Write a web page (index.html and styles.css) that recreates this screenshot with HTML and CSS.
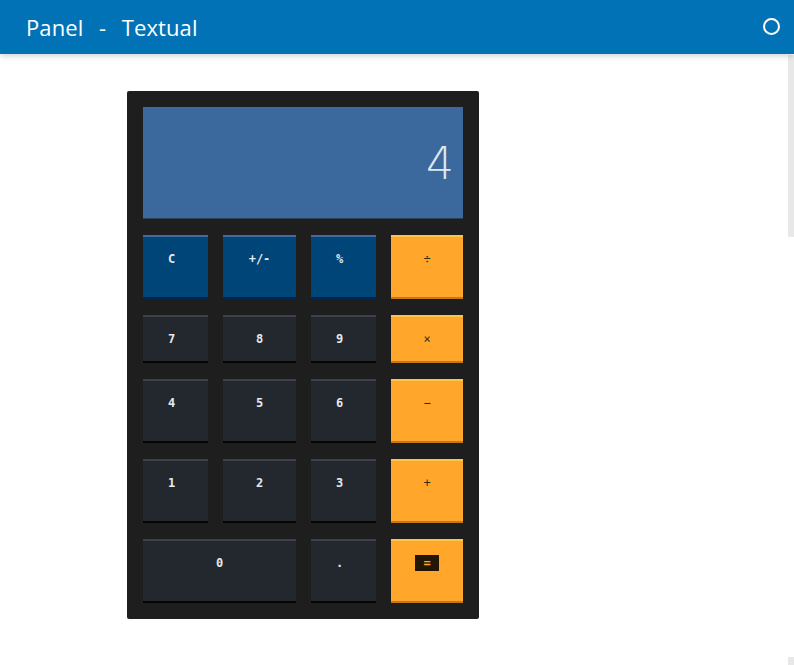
FILE: index.html
```html
<!DOCTYPE html>
<html>
<head>
<meta charset="utf-8">
<link rel="stylesheet" href="styles.css">
</head>
<body>
<header class="topbar">
  <div class="title">Panel  -  Textual</div>
  <div class="status"></div>
</header>
<main class="content">
  <div class="calc">
    <div class="display"><span class="readout">4</span></div>
    <div class="keys">
      <div class="key fn narrow">C</div>
      <div class="key fn">+/-</div>
      <div class="key fn narrow">%</div>
      <div class="key op">÷</div>
      <div class="key num narrow">7</div>
      <div class="key num">8</div>
      <div class="key num narrow">9</div>
      <div class="key op">×</div>
      <div class="key num narrow">4</div>
      <div class="key num">5</div>
      <div class="key num narrow">6</div>
      <div class="key op">−</div>
      <div class="key num narrow">1</div>
      <div class="key num">2</div>
      <div class="key num narrow">3</div>
      <div class="key op">+</div>
      <div class="key num wide">0</div>
      <div class="key num narrow">.</div>
      <div class="key op eq"><span class="eqbox">=</span></div>
    </div>
  </div>
</main>
<div class="scroll-thumb"></div>
<div class="scroll-corner"></div>
</body>
</html>
```
FILE: styles.css
```css
html, body {
  margin: 0;
  padding: 0;
  background: #ffffff;
  height: 100%;
  overflow: hidden;
}
body {
  font-family: "Open Sans", "Noto Sans", sans-serif;
  position: relative;
}
.topbar {
  height: 54px;
  background: #0072b5;
  display: flex;
  align-items: center;
  justify-content: space-between;
  padding: 0 14px 0 26px;
  box-shadow: 0 2px 6px rgba(0,0,0,0.18);
  position: relative;
  z-index: 1;
}
.title {
  color: #ffffff;
  font-size: 22px;
  white-space: pre;
  word-spacing: 2px;
  letter-spacing: 0.1px;
  margin-top: -1px;
}
.status {
  width: 13px;
  height: 13px;
  border: 2.5px solid #ffffff;
  border-radius: 50%;
  margin-top: -2px;
}
.content {
  padding: 37px 0 0 127px;
}
.calc {
  width: 320px;
  padding: 16px;
  background: #1e1e1e;
  border-radius: 2px;
  display: flex;
  flex-direction: column;
  gap: 16px;
}
.display {
  height: 111px;
  background: #3b699d;
  border-bottom: 1px solid #2f3f52;
  display: flex;
  justify-content: flex-end;
  align-items: center;
  padding-right: 9px;
}
.readout {
  font-family: "DejaVu Sans", sans-serif;
  font-weight: 200;
  font-size: 44px;
  color: #dfe8f2;
  line-height: 1;
  margin-top: 2px;
}
.keys {
  display: grid;
  grid-template-columns: 65px 73px 65px 72px;
  grid-template-rows: 64px 48px 64px 64px 64px;
  column-gap: 15px;
  row-gap: 16px;
}
.key {
  box-sizing: border-box;
  font-family: "DejaVu Sans Mono", monospace;
  font-weight: bold;
  font-size: 12px;
  line-height: 14px;
  padding-top: 15px;
  text-align: center;
  color: #e6e9ee;
  border-top: 2px solid;
  border-bottom: 2px solid;
}
.narrow {
  padding-right: 8px;
}
.fn {
  background: #004578;
  border-top-color: #3f6c9c;
  border-bottom-color: #002550;
}
.num {
  background: #23272e;
  border-top-color: #3e4147;
  border-bottom-color: #050505;
}
.op {
  background: #ffa62b;
  border-top-color: #ffc24e;
  border-bottom-color: #c47a14;
  color: #3a2a10;
  font-weight: normal;
}
.wide {
  grid-column: span 2;
}
.eq {
  display: flex;
  justify-content: center;
  align-items: flex-start;
  padding-top: 14px;
}
.eqbox {
  display: block;
  width: 24px;
  height: 16px;
  line-height: 16px;
  background: #241605;
  color: #ffa62b;
  font-weight: bold;
}
.scroll-thumb {
  position: absolute;
  right: 0;
  top: 55px;
  width: 6px;
  height: 182px;
  background: #e8e8e8;
}
.scroll-corner {
  position: absolute;
  right: 0;
  bottom: 0;
  width: 6px;
  height: 8px;
  background: #e8e8e8;
}
```
